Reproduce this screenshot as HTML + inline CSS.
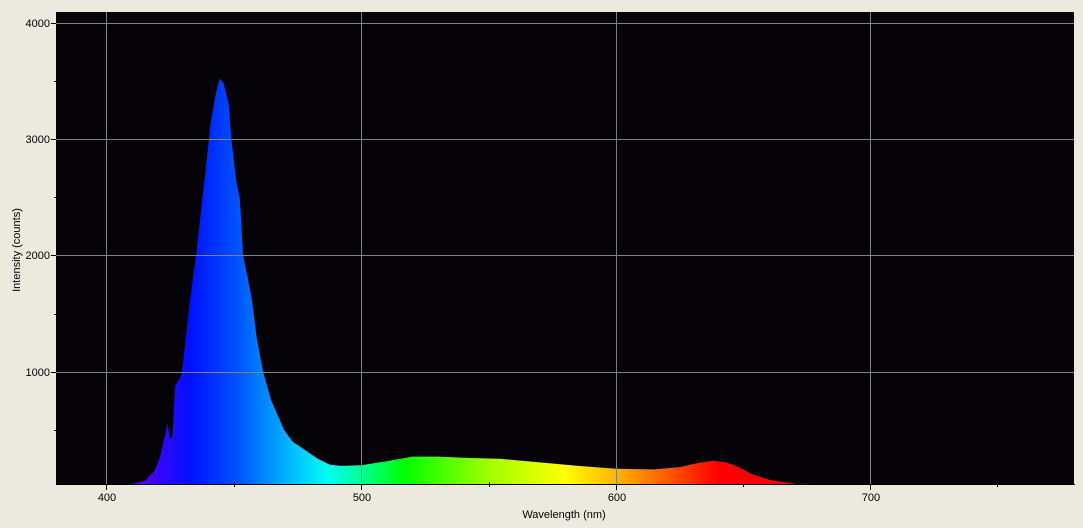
<!DOCTYPE html>
<html><head><meta charset="utf-8"><style>
html,body{margin:0;padding:0;background:#ece9df;}
svg{display:block;font-family:"Liberation Sans",sans-serif;}
</style></head><body>
<svg id="s" width="1083" height="528" viewBox="0 0 1083 528">
<defs>
<linearGradient id="g" gradientUnits="userSpaceOnUse" x1="106.3" y1="0" x2="871.3" y2="0">
<stop offset="0.01" stop-color="#7a00ff"/>
<stop offset="0.04" stop-color="#5a00ff"/>
<stop offset="0.11" stop-color="#0010ff"/>
<stop offset="0.17" stop-color="#0050ff"/>
<stop offset="0.24" stop-color="#00b8ff"/>
<stop offset="0.29" stop-color="#00fff0"/>
<stop offset="0.335" stop-color="#00ff90"/>
<stop offset="0.39" stop-color="#00ff00"/>
<stop offset="0.5" stop-color="#a0ff00"/>
<stop offset="0.6" stop-color="#ffff00"/>
<stop offset="0.67" stop-color="#ffb000"/>
<stop offset="0.74" stop-color="#ff5000"/>
<stop offset="0.8" stop-color="#ff0000"/>
<stop offset="1" stop-color="#ff0000"/>
</linearGradient>
</defs>
<rect x="56" y="12" width="1018" height="473" fill="#050307"/>
<path id="sp" fill="url(#g)" d=""/>
<g stroke="#808080" stroke-width="1">
<line x1="106.5" y1="12" x2="106.5" y2="485"/>
<line x1="361.5" y1="12" x2="361.5" y2="485"/>
<line x1="616.5" y1="12" x2="616.5" y2="485"/>
<line x1="870.5" y1="12" x2="870.5" y2="485"/>
<line x1="56" y1="23.5" x2="1074" y2="23.5"/>
<line x1="56" y1="139.5" x2="1074" y2="139.5"/>
<line x1="56" y1="255.5" x2="1074" y2="255.5"/>
<line x1="56" y1="372.5" x2="1074" y2="372.5"/>
</g>
<g stroke="#000" stroke-width="1">
<line x1="56" y1="484.5" x2="1075" y2="484.5"/>
<line x1="51" y1="23.5" x2="56" y2="23.5"/><line x1="54" y1="81.5" x2="56" y2="81.5"/>
<line x1="51" y1="139.5" x2="56" y2="139.5"/><line x1="54" y1="197.5" x2="56" y2="197.5"/>
<line x1="51" y1="255.5" x2="56" y2="255.5"/><line x1="54" y1="314.5" x2="56" y2="314.5"/>
<line x1="51" y1="372.5" x2="56" y2="372.5"/><line x1="54" y1="430.5" x2="56" y2="430.5"/>
<line x1="106.5" y1="485" x2="106.5" y2="490"/><line x1="234.5" y1="482" x2="234.5" y2="487"/>
<line x1="361.5" y1="485" x2="361.5" y2="490"/><line x1="489.5" y1="482" x2="489.5" y2="487"/>
<line x1="616.5" y1="485" x2="616.5" y2="490"/><line x1="743.5" y1="482" x2="743.5" y2="487"/>
<line x1="870.5" y1="485" x2="870.5" y2="490"/><line x1="997.5" y1="482" x2="997.5" y2="487"/>
</g>
<g font-size="11" fill="#000" text-anchor="end">
<text x="50" y="27">4000</text><text x="50" y="143">3000</text>
<text x="50" y="259">2000</text><text x="50" y="376">1000</text>
</g>
<g font-size="11" fill="#000" text-anchor="middle">
<text x="107" y="501">400</text><text x="362" y="501">500</text>
<text x="617" y="501">600</text><text x="871" y="501">700</text>
<text x="564" y="518">Wavelength (nm)</text>
<text transform="translate(20,250) rotate(-90)">Intensity (counts)</text>
</g>
</svg>
<script>
var d=[[405,0],[410,15],[415,60],[419,150],[421,260],[423,450],[424,560],[425,420],[426,450],[427,880],[429,950],[429.7,1000],[431,1250],[432.8,1616],[435.2,2003],[437,2350],[439,2750],[441,3150],[443,3400],[444.5,3520],[446,3480],[448,3300],[449,3000],[450.9,2648],[452.4,2476],[453.6,2003],[455.5,1800],[457.1,1616],[459.1,1272],[461.5,997],[464.6,757],[469.7,499],[473,400],[477.9,327],[483,250],[487.7,200],[492,190],[500,195],[510,230],[520,270],[530,270],[540,260],[555,250],[570,220],[585,190],[600,165],[615,160],[625,180],[632,215],[638,235],[643,220],[648,180],[653,120],[660,70],[670,35],[680,15],[690,5],[700,0]];
var p="M"+(106.3+5*2.55)+",484";
d.forEach(function(a){var x=106.3+(a[0]-400)*2.55,y=Math.min(484,488-a[1]*0.1163);p+=" L"+x.toFixed(1)+","+y.toFixed(1);});
p+=" L871,484 Z";
document.getElementById("sp").setAttribute("d",p);
</script>
</body></html>
